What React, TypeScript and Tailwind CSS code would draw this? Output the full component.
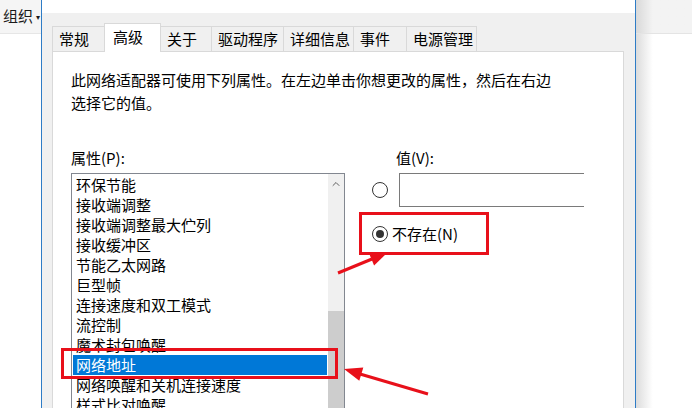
import {ChevronUp} from "lucide-react";

const tabs = [
    {label: "常规", w: "w-[53px]"},
    {label: "高级", w: "w-[57px]", active: true},
    {label: "关于", w: "w-[52px]"},
    {label: "驱动程序", w: "w-[73px]"},
    {label: "详细信息", w: "w-[71px]"},
    {label: "事件", w: "w-[54px]"},
    {label: "电源管理", w: "w-[71px]"},
];

const items = [
    "环保节能",
    "接收端调整",
    "接收端调整最大伫列",
    "接收缓冲区",
    "节能乙太网路",
    "巨型帧",
    "连接速度和双工模式",
    "流控制",
    "魔术封包唤醒",
    "网络地址",
    "网络唤醒和关机连接速度",
    "样式比对唤醒",
];

const Radio = ({checked}: {checked?: boolean}) => (
    <span className="flex h-[16px] w-[16px] shrink-0 items-center justify-center rounded-full border border-[#333] bg-white">
        {checked && <span className="h-[8px] w-[8px] rounded-full bg-[#333]" />}
    </span>
);

export default function App() {
    return (
        <div className="relative flex h-[408px] w-[692px] overflow-hidden bg-white text-[15px] text-black font-['Noto_Sans_CJK_SC','Noto_Sans',sans-serif]">
            {/* explorer window behind, left side */}
            <div className="flex w-[41px] shrink-0 flex-col">
                <div className="flex h-[34px] shrink-0 items-center whitespace-nowrap border-b border-[#e6e6e6] bg-[#f5f5f5] pl-[3px] text-[#1a1a1a]">
                    组织 <span className="ml-[3px] text-[8px]">▾</span>
                </div>
                <div className="flex-1 bg-white" />
            </div>

            {/* properties dialog */}
            <div className="flex h-[408px] w-[595px] shrink-0 flex-col overflow-hidden border-x border-[#2e7cc6]">
                <div className="h-[13px] shrink-0 overflow-hidden bg-white pl-[62px]">
                    <div className="mt-[-20px] whitespace-nowrap leading-[20px] text-[#222]">
                        Realtek PCIe GbE Family Controller 属性
                    </div>
                </div>

                <div className="flex flex-1 flex-col bg-[#f0f0f0] pl-[10px] pr-[11px] pt-[10px]">
                    <div className="flex h-[28px] shrink-0 items-end">
                        {tabs.map((t) =>
                            t.active ? (
                                <div
                                    key={t.label}
                                    className={`${t.w} relative z-10 -ml-px mb-[-1px] h-[29px] border border-b-0 border-[#d9d9d9] bg-white pl-[8px] pt-[2px] leading-[22px]`}
                                >
                                    {t.label}
                                </div>
                            ) : (
                                <div
                                    key={t.label}
                                    className={`${t.w} -ml-px h-[25px] border border-b-0 border-[#d9d9d9] bg-[#f0f0f0] pl-[6px] leading-[24px] first:ml-0`}
                                >
                                    {t.label}
                                </div>
                            )
                        )}
                    </div>

                    <div className="flex-1 overflow-hidden border border-b-0 border-[#d9d9d9] bg-white pl-[18px] pt-[16px]">
                        <p className="leading-[23px]">
                            此网络适配器可使用下列属性。在左边单击你想更改的属性，然后在右边
                            <br />
                            选择它的值。
                        </p>

                        <div className="mt-[34px] flex gap-[27px]">
                            <div className="flex w-[274px] flex-col">
                                <div className="h-[20px] leading-[20px]">属性(P):</div>
                                <div className="mt-[5px] flex h-[260px] border border-[#828790]">
                                    <ul className="flex-1 p-px">
                                        {items.map((it) => (
                                            <li
                                                key={it}
                                                className={
                                                    it === "网络地址"
                                                        ? "h-[20px] whitespace-nowrap bg-[#0078d7] pl-[3px] leading-[20px] text-white"
                                                        : "h-[20px] whitespace-nowrap pl-[3px] leading-[20px]"
                                                }
                                            >
                                                {it}
                                            </li>
                                        ))}
                                    </ul>
                                    <div className="flex w-[16px] flex-col bg-[#f0f0f0]">
                                        <div className="flex h-[17px] items-center justify-center pt-[2px]">
                                            <ChevronUp size={12} strokeWidth={2} className="text-[#606060]" />
                                        </div>
                                        <div className="h-[120px]" />
                                        <div className="flex-1 bg-[#cdcdcd]" />
                                    </div>
                                </div>
                            </div>

                            <div className="flex flex-col">
                                <div className="ml-[24px] h-[20px] leading-[20px]">值(V):</div>
                                <div className="mt-[5px] flex items-center gap-[11px]">
                                    <Radio />
                                    <div className="h-[34px] w-[185px] border border-r-0 border-[#7a7a7a] bg-white" />
                                </div>
                                <div className="mt-[17px] flex items-center gap-[4px]">
                                    <Radio checked />
                                    <span className="leading-[20px]">不存在(N)</span>
                                </div>
                            </div>
                        </div>
                    </div>
                </div>
            </div>

            {/* explorer window behind, right side */}
            <div className="flex flex-1 flex-col bg-gradient-to-r from-[#dcdcdc] via-white via-30% to-white">
                <div className="h-[34px] border-b border-[#e4e4e4] bg-gradient-to-r from-[#d9d9d9] via-[#f3f3f3] via-30% to-[#f3f3f3]" />
            </div>

            {/* annotations */}
            <div className="pointer-events-none absolute left-[359px] top-[212px] h-[43px] w-[130px] border-[3px] border-[#e8101a]" />
            <div className="pointer-events-none absolute left-[61px] top-[348px] h-[31px] w-[277px] border-[3px] border-[#e8101a]" />
            <svg className="pointer-events-none absolute left-0 top-0" width="692" height="408" viewBox="0 0 692 408">
                <line x1="338" y1="273" x2="372" y2="259" stroke="#e8101a" strokeWidth="3" />
                <polygon points="388,252 374.1,265.5 368.7,252.5" fill="#e8101a" />
                <line x1="428" y1="394" x2="360" y2="374" stroke="#e8101a" strokeWidth="3" />
                <polygon points="344,369 363.3,367.4 359.3,380.8" fill="#e8101a" />
            </svg>
        </div>
    );
}
